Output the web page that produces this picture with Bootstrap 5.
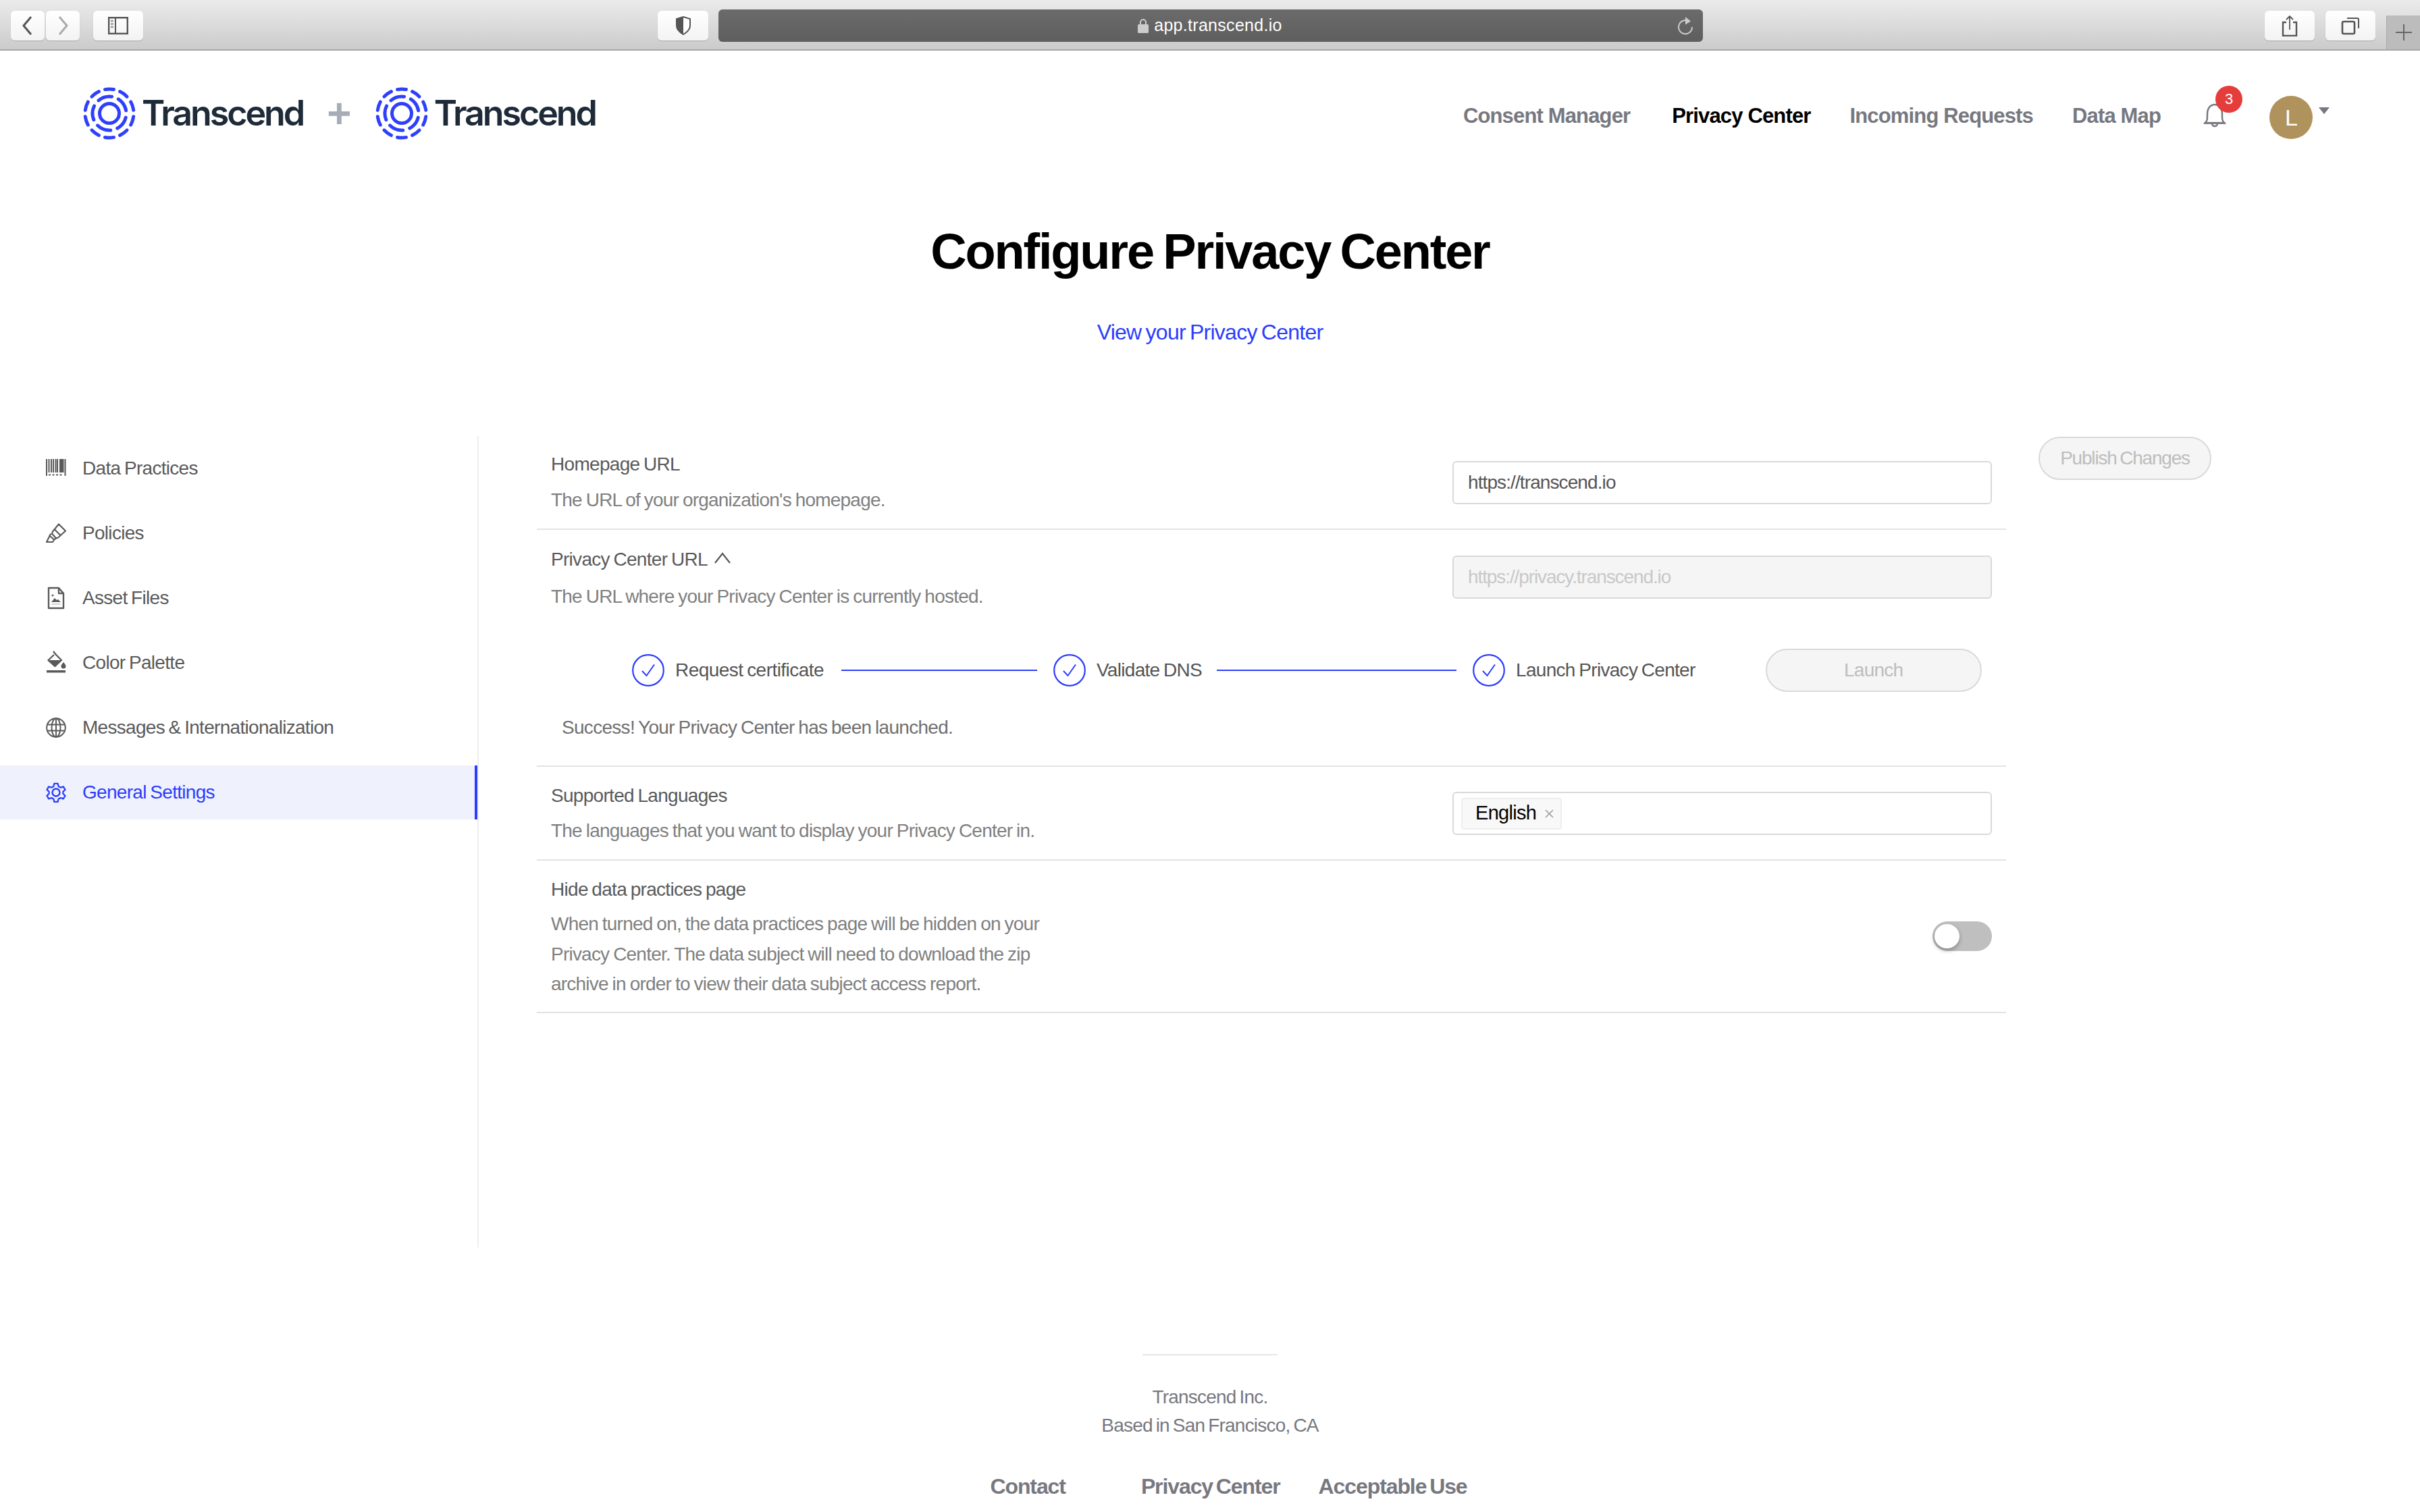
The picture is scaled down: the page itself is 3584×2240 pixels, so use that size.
<!DOCTYPE html>
<html lang="en">
<head>
<meta charset="utf-8">
<title>Configure Privacy Center</title>
<link rel="stylesheet" href="https://cdn.jsdelivr.net/npm/bootstrap@5.3.0/dist/css/bootstrap.min.css">
<style>
body{margin:0;width:3584px;height:2240px;overflow:hidden;background:#fff;font-family:"Liberation Sans",Arial,sans-serif;font-size:28px;letter-spacing:-.7px;word-spacing:-1.5px;color:#555}
/* browser chrome */
.chrome{height:75px;background:linear-gradient(#ebebeb,#cbcbcb);border-bottom:2px solid #a6a6a6;padding:3px 0 0 16px}
.cbtn{height:44px;background:linear-gradient(#fff,#f3f3f3);border-radius:6px;box-shadow:0 1px 1px #aaa;display:flex;align-items:center;justify-content:center;flex:none}
.cb50{width:50px;margin-right:2px}.cb74{width:74px}.cb76{width:75px}
.sbtn{margin-left:18px}
.shieldb{margin-left:762px}
.sharebtn{margin-left:832px}
.urlbar{width:1458px;height:48px;background:linear-gradient(#6b6b6b,#5e5e5e);border-radius:6px;margin-left:15px;color:#fff;font-size:25px;letter-spacing:.3px;word-spacing:0;flex:none;padding:0 14px 0 0}
.urltext{padding-left:36px}
.plus{width:50px;height:50px;background:#bcbcbc;align-self:flex-end;margin-left:16px;border-left:1px solid #aaa}
/* header */
.topbar{height:190px;padding:0;margin:0}
.brand{font-family:Inter,"Liberation Sans",sans-serif;font-weight:600;font-size:52px;letter-spacing:-3.1px;word-spacing:0;color:#1e2a38;line-height:1;margin-left:8px}
.logoset{margin-left:122px;padding-bottom:4px}
.lplus{color:#a7adb8;font-size:62px;font-weight:700;font-family:"Liberation Sans",sans-serif;line-height:1;margin:0 35px}
.toplink{font-size:31px;font-weight:700;letter-spacing:-.85px;word-spacing:0;color:#77787f;padding:0;margin:4px 58px 0 0;line-height:40px}
.toplink.on{color:#000}
.toplink.firstl{margin-right:62px}
.toplink.lastl{margin-right:62px}
.bellwrap{width:64px;height:60px;margin:20px 35px 0 0}
.bcount{top:-23px;left:19px;width:40px;height:40px;border-radius:50%;background:#e53c3c;color:#fff;font-size:22px;letter-spacing:0;line-height:40px;text-align:center}
.avatar{width:64px;height:64px;border-radius:50%;background:#b0925c;color:#fff;font-size:34px;line-height:64px;text-align:center;margin-top:8px}
.caretm{width:0;height:0;border:8px solid transparent;border-top:10px solid #77787f;border-bottom:0;margin:-12px 134px 0 9px}
/* title */
.pagetitle{font-size:74px;font-weight:700;letter-spacing:-2.2px;word-spacing:-4px;color:#000;line-height:86px;margin:65px 0 0}
.viewlink{font-size:32px;letter-spacing:-.75px;word-spacing:-2px;color:#2b3dfc;text-decoration:none;line-height:44px;display:block;margin-top:54px}
/* sidebar */
.mainwrap{margin-top:132px;height:1202px}
.sidebar{width:709px;border-right:2px solid #eeeeee;padding-top:8px;flex:none}
.sideitem{height:80px;margin-bottom:16px;padding:0 0 0 68px;gap:24px;color:#5a5a5a;border:0;background:transparent;text-decoration:none}
.sideitem.on{background:#eff1fd;color:#2b3dfc;border-right:4px solid #2b3dfc;margin-right:0}
.sideitem svg{width:30px;height:36px;flex:none}
/* content */
.panel{width:2176px;margin-left:86px;flex:none}
.setrow{border-bottom:2px solid #e3e3e3;padding:0 21px}
.ttl{line-height:44px;color:#5a5a5a}
.sub{line-height:44px;color:#808080;letter-spacing:-.78px;word-spacing:-1.2px}
.r1{padding-top:20px;padding-bottom:20px}.r1 .sub{margin-top:9px}.r1 .fieldcol{margin-top:17px}
.r2{padding-top:22px;padding-bottom:34px}.r2 .sub{margin-top:11px}.r2 .fieldcol{margin-top:16px}
.r3{padding-top:21px;padding-bottom:20px}.r3 .sub{margin-top:8px}.r3 .fieldcol{margin-top:16px}
.r4{padding-top:21px;padding-bottom:18px}.r4 .sub{margin-top:7px;line-height:44.5px}
.fieldcol{width:799px;flex:none}
.fld{height:64px;border:2px solid #d9d9d9;border-radius:6px;font-size:28px;letter-spacing:-.9px;color:#555;padding:0 21px;box-shadow:none;font-family:inherit}
.fld:disabled{background:#f5f5f5;color:#c8c8c8;opacity:1;border-color:#d9d9d9;letter-spacing:-1.1px}
.tagbox{height:64px;border:2px solid #d9d9d9;border-radius:6px;padding:0 0 0 11px}
.lang{height:47px;width:149px;background:#f8f8f8;border:2px solid #eeeeee;border-radius:4px;padding:0 0 0 19px;color:#000;font-size:29px;letter-spacing:-.7px;gap:13px}
.stepper{margin:55px 0 0 120px;height:64px}
.stepc{width:48px;height:48px;flex:none}
.steptx{margin-left:16px;white-space:nowrap;color:#555;letter-spacing:-.55px}
.steptx.s3{letter-spacing:-.7px}
.stepl{height:2px;background:#2b3dfc;flex:none}
.l1{width:290px;margin:0 24px 0 26px}.l2{width:355px;margin:0 24px 0 22px}
.pillb{height:64px;border:2px solid #d9d9d9;border-radius:32px;background:#f5f5f5;color:#bdbdbd;font-size:28px;letter-spacing:-.8px;word-spacing:-2px;padding:0;opacity:1;flex:none}
.pillb:disabled{background:#f5f5f5;color:#bdbdbd;border-color:#d9d9d9;opacity:1}
.launchb{width:320px;margin-left:104px}
.pubb{width:256px;margin:1px 0 0 48px;letter-spacing:-1.2px}
.okmsg{margin:31px 0 0 16px;line-height:44px;color:#707070}
.sw{width:88px;height:44px;background:#bfbfbf;border-radius:22px;padding:4px 3px;flex:none;margin-bottom:3px}
.swk{width:37px;height:36px;background:#fff;border-radius:50%;box-shadow:0 3px 6px rgba(0,0,0,.3)}
/* footer */
.footline{width:200px;height:2px;background:#e6e6e6;margin:158px auto 0 auto}
.foot{color:#77787f;line-height:42px;margin-top:41px;font-size:28px;letter-spacing:-.8px;word-spacing:-2px}
.flinks{margin-top:47px;padding-left:55px;gap:0}
.flink{font-size:32px;font-weight:700;letter-spacing:-1.1px;word-spacing:-3px;color:#77787f;line-height:44px;padding:0;text-decoration:none}
.fl1{margin-right:112px}.fl2{margin-right:57px}
</style>
</head>
<body>
<svg width="0" height="0" class="position-absolute">
<defs>
<g id="tlogo" fill="none" stroke="#2f40fb" stroke-linecap="round">
<circle cx="40" cy="40" r="36" stroke-width="5" pathLength="100" stroke-dasharray="5.75 4.25" transform="rotate(-100.35 40 40)"/>
<circle cx="40" cy="40" r="25" stroke-width="5" pathLength="100" stroke-dasharray="13.4 6.6" transform="rotate(-130 40 40)"/>
<circle cx="40" cy="40" r="14.5" stroke-width="5"/>
</g>
<g id="okc" fill="none" stroke="#2b3dfc">
<circle cx="24" cy="24" r="22.8" stroke-width="2.2"/>
<path d="M15 25l6.5 7L33 15.500" stroke-width="2"/>
</g>
</defs>
</svg>

<div class="chrome d-flex align-items-center">
  <div class="cbtn cb50"><svg width="18" height="30" viewBox="0 0 18 30"><path d="M14 2L3 15l11 13" fill="none" stroke="#555" stroke-width="3"/></svg></div>
  <div class="cbtn cb50"><svg width="18" height="30" viewBox="0 0 18 30"><path d="M4 2l11 13L4 28" fill="none" stroke="#aaa" stroke-width="3"/></svg></div>
  <div class="cbtn cb74 sbtn"><svg width="30" height="26" viewBox="0 0 30 26"><rect x="1.200" y="1.200" width="27.600" height="23.600" fill="none" stroke="#555" stroke-width="2.400"/><path d="M11 1v24" stroke="#555" stroke-width="2"/><path d="M4 6h4M4 10.500h4M4 15h4" stroke="#999" stroke-width="2.500"/></svg></div>
  <div class="cbtn cb76 shieldb"><svg width="24" height="28" viewBox="0 0 24 28"><path d="M12 1l10 3v10c0 6-5 10-10 13C7 24 2 20 2 14V4z" fill="#fff" stroke="#555" stroke-width="2"/><path d="M12 1L2 4v10c0 6 5 10 10 13z" fill="#555"/></svg></div>
  <div class="urlbar d-flex align-items-center">
    <div class="urltext flex-grow-1 d-flex justify-content-center align-items-center gap-2">
      <svg width="16" height="22" viewBox="0 0 16 22"><path d="M4 10V6a4 4 0 018 0v4" fill="none" stroke="#ccc" stroke-width="2"/><rect y="9" width="16" height="13" rx="1.500" fill="#ccc"/></svg>
      <span>app.transcend.io</span>
    </div>
    <svg width="24" height="28" viewBox="0 0 24 28"><path d="M17 7.500A10 10 0 1 0 22 16" fill="none" stroke="#ccc" stroke-width="2"/><path d="M12 1l8 6.500-8 5z" fill="#ccc"/></svg>
  </div>
  <div class="cbtn cb74 sharebtn"><svg width="26" height="32" viewBox="0 0 26 32"><path d="M8 11H3v20h20V11h-5" fill="none" stroke="#555" stroke-width="2.400"/><path d="M13 22V2M8 7l5-5 5 5" fill="none" stroke="#555" stroke-width="1.800"/></svg></div>
  <div class="cbtn cb74 ms-3"><svg width="28" height="28" viewBox="0 0 28 28"><rect x="2" y="8" width="18" height="18" rx="2" fill="none" stroke="#555" stroke-width="2.600"/><path d="M9 3h15a2 2 0 012 2v13" fill="none" stroke="#555" stroke-width="2"/></svg></div>
  <div class="plus d-flex align-items-center justify-content-center"><svg width="24" height="24" viewBox="0 0 24 24"><path d="M12 0v24M0 12h24" stroke="#666" stroke-width="2"/></svg></div>
</div>

<nav class="navbar topbar d-flex justify-content-between align-items-center">
  <div class="logoset d-flex align-items-center">
    <svg width="80" height="80" viewBox="0 0 80 80"><use href="#tlogo"/></svg>
    <span class="brand">Transcend</span>
    <span class="lplus">+</span>
    <svg width="80" height="80" viewBox="0 0 80 80"><use href="#tlogo"/></svg>
    <span class="brand">Transcend</span>
  </div>
  <div class="d-flex align-items-center">
    <a class="nav-link toplink firstl" href="#">Consent Manager</a>
    <a class="nav-link toplink on" href="#">Privacy Center</a>
    <a class="nav-link toplink" href="#">Incoming Requests</a>
    <a class="nav-link toplink lastl" href="#">Data Map</a>
    <div class="bellwrap position-relative">
      <svg width="36" height="42" viewBox="0 0 36 42" class="d-block"><path d="M4 32c3-3 3-5 3-13C7 11 11 5 18 5s11 6 11 14c0 8 0 10 3 13z" fill="none" stroke="#77787f" stroke-width="2.500"/><path d="M14 33a4 4 0 008 0" fill="none" stroke="#77787f" stroke-width="2.500"/><path d="M2 32.500h32" stroke="#77787f" stroke-width="2.500"/></svg>
      <span class="bcount position-absolute">3</span>
    </div>
    <div class="avatar">L</div>
    <div class="caretm"></div>
  </div>
</nav>

<div class="text-center">
  <h1 class="pagetitle">Configure Privacy Center</h1>
  <a class="viewlink" href="#">View your Privacy Center</a>
</div>

<div class="mainwrap d-flex align-items-stretch">
  <div class="sidebar list-group-flush">
    <a class="sideitem d-flex align-items-center" href="#"><svg viewBox="0 0 30 36"><path d="M1 4v25M4.500 4v20M8 4v20M11 4v20M14.500 4v20M17 4v20M21 4v20M28.500 4v25" stroke="#5a5a5a" stroke-width="2" fill="none"/><rect x="21" y="4" width="5.500" height="20" fill="#5a5a5a"/><path d="M4 27.500h22" stroke="#5a5a5a" stroke-width="2" stroke-dasharray="3 2.500"/></svg>Data Practices</a>
    <a class="sideitem d-flex align-items-center" href="#"><svg viewBox="0 0 30 36"><path d="M19 4.500l10 10-11 10-3 1-6-7 1-3zM7.500 18.500l-2 3 6.500 6 3-2M5.500 22L1 31h9l2-3M12 11.500l10 10" fill="none" stroke="#5a5a5a" stroke-width="2.200" stroke-linejoin="round"/></svg>Policies</a>
    <a class="sideitem d-flex align-items-center" href="#"><svg viewBox="0 0 30 36"><path d="M4 3h15l7 8v22H4zM19 3v8h7" fill="none" stroke="#5a5a5a" stroke-width="2.400" stroke-linejoin="round"/><circle cx="10" cy="14" r="1.500" fill="#5a5a5a"/><path d="M8 24l5-6 3 3 2-1 4 4z" fill="#5a5a5a"/><path d="M8 27h14" stroke="#aaa" stroke-width="1"/></svg>Asset Files</a>
    <a class="sideitem d-flex align-items-center" href="#"><svg viewBox="0 0 30 36"><path d="M11 1l4 5 8 8-9.500 9L3.500 14 12 6" fill="none" stroke="#5a5a5a" stroke-width="2.400" stroke-linejoin="round"/><path d="M3.500 14h19.500l-9.500 9z" fill="#5a5a5a"/><path d="M26 17c-2.500 3-3.500 4.500-3.500 6a3.500 3.500 0 007 0c0-1.500-1-3-3.500-6z" fill="#5a5a5a"/><rect x="1" y="29" width="28" height="3.500" fill="#5a5a5a"/></svg>Color Palette</a>
    <a class="sideitem d-flex align-items-center" href="#"><svg viewBox="0 0 30 36"><g fill="none" stroke="#5a5a5a" stroke-width="2"><circle cx="15" cy="18" r="13.800"/><ellipse cx="15" cy="18" rx="6.500" ry="13.800"/><path d="M15 4v28M2 13.500h26M2 22.500h26"/></g></svg>Messages &amp; Internationalization</a>
    <a class="sideitem on d-flex align-items-center" href="#"><svg viewBox="0 0 30 36"><path d="M12 3.500h6l1 4.500 3.500 2 4.500-1.500 3 5-3.500 3.500v3l3.500 3.500-3 5-4.500-1.500-3.500 2-1 4.500h-6l-1-4.500-3.500-2L3 28.500l-3-5L3.500 20v-3L0 13.500l3-5L7.500 10l3.500-2z" transform="translate(1.500 1.700) scale(.9)" fill="none" stroke="#2b3dfc" stroke-width="2.500" stroke-linejoin="round"/><circle cx="15" cy="18" r="5.500" fill="none" stroke="#2b3dfc" stroke-width="2.400"/></svg>General Settings</a>
  </div>

  <div class="panel">
    <div class="setrow r1 d-flex justify-content-between align-items-start">
      <div><div class="ttl">Homepage URL</div><div class="sub">The URL of your organization's homepage.</div></div>
      <div class="fieldcol"><input class="form-control fld" type="text" value="https://transcend.io" aria-label="Homepage URL"></div>
    </div>

    <div class="setrow r2">
      <div class="d-flex justify-content-between align-items-start">
        <div>
          <div class="ttl d-flex align-items-center">Privacy Center URL<svg class="ms-2 mb-1" width="28" height="20" viewBox="0 0 28 20"><path d="M3 17L14 3l11 14" fill="none" stroke="#555" stroke-width="2.200"/></svg></div>
          <div class="sub">The URL where your Privacy Center is currently hosted.</div>
        </div>
        <div class="fieldcol"><input class="form-control fld" type="text" value="https://privacy.transcend.io" disabled aria-label="Privacy Center URL"></div>
      </div>
      <div class="stepper d-flex align-items-center">
        <svg class="stepc" viewBox="0 0 48 48"><use href="#okc"/></svg><span class="steptx">Request certificate</span>
        <span class="stepl l1"></span>
        <svg class="stepc" viewBox="0 0 48 48"><use href="#okc"/></svg><span class="steptx s3">Validate DNS</span>
        <span class="stepl l2"></span>
        <svg class="stepc" viewBox="0 0 48 48"><use href="#okc"/></svg><span class="steptx s3">Launch Privacy Center</span>
        <button class="btn pillb launchb" disabled>Launch</button>
      </div>
      <div class="okmsg">Success! Your Privacy Center has been launched.</div>
    </div>

    <div class="setrow r3 d-flex justify-content-between align-items-start">
      <div><div class="ttl">Supported Languages</div><div class="sub">The languages that you want to display your Privacy Center in.</div></div>
      <div class="fieldcol"><div class="tagbox d-flex align-items-center"><span class="lang d-flex align-items-center">English<svg width="13" height="13" viewBox="0 0 13 13"><path d="M1 1l11 11M12 1L1 12" stroke="#999" stroke-width="1.500"/></svg></span></div></div>
    </div>

    <div class="setrow r4 d-flex justify-content-between align-items-center">
      <div><div class="ttl">Hide data practices page</div><div class="sub">When turned on, the data practices page will be hidden on your<br>Privacy Center. The data subject will need to download the zip<br>archive in order to view their data subject access report.</div></div>
      <div class="sw" role="switch" aria-checked="false"><div class="swk"></div></div>
    </div>
  </div>

  <div><button class="btn pillb pubb" disabled>Publish Changes</button></div>
</div>

<div class="footline"></div>
<div class="foot text-center">Transcend Inc.<br>Based in San Francisco, CA</div>
<div class="flinks d-flex justify-content-center">
  <a class="flink fl1" href="#">Contact</a>
  <a class="flink fl2" href="#">Privacy Center</a>
  <a class="flink" href="#">Acceptable Use</a>
</div>

<script src="https://cdn.jsdelivr.net/npm/bootstrap@5.3.0/dist/js/bootstrap.bundle.min.js"></script>
</body>
</html>
